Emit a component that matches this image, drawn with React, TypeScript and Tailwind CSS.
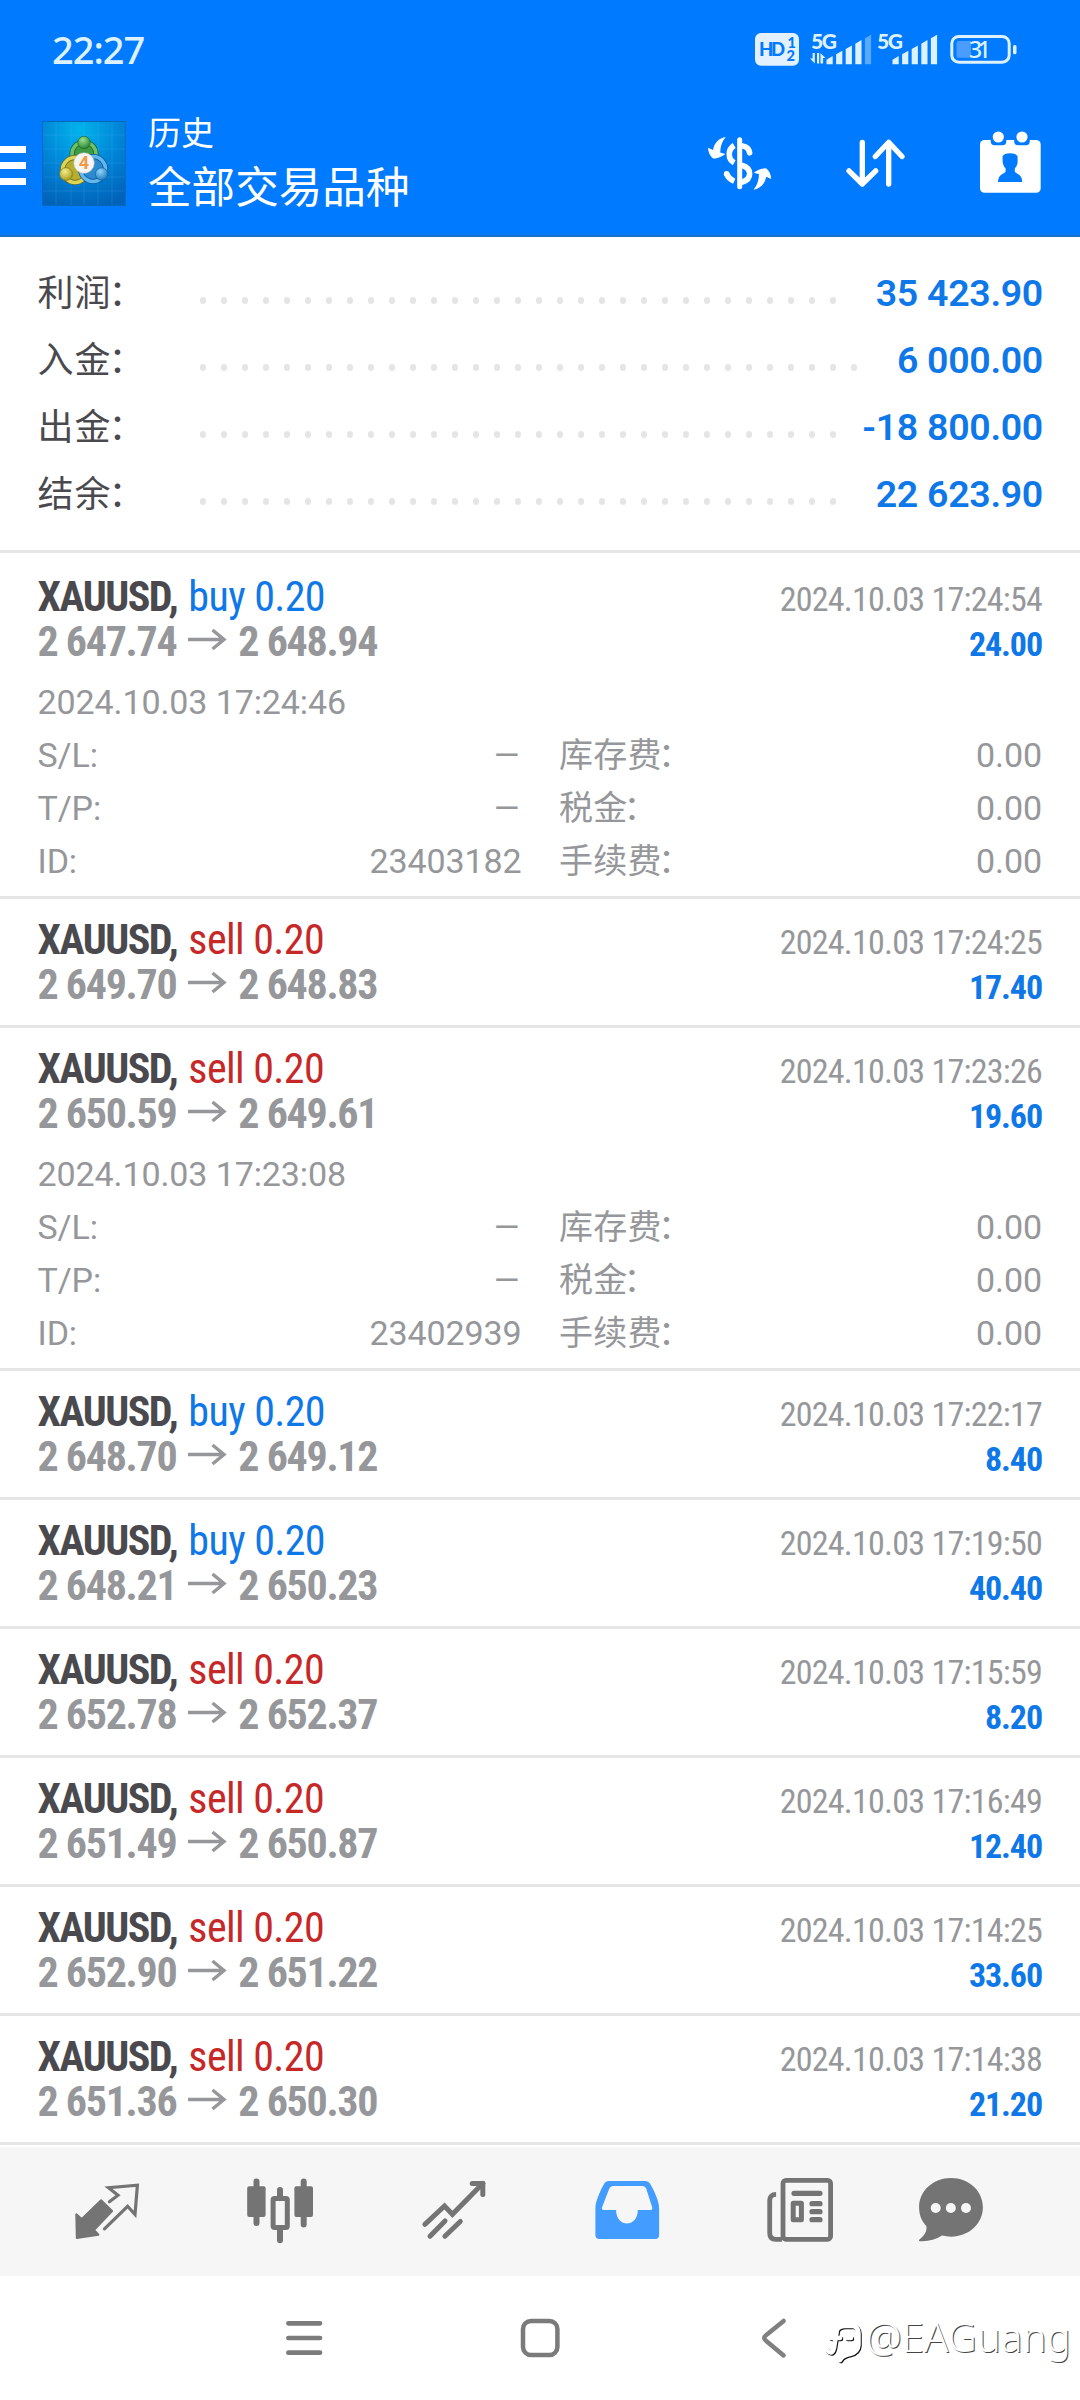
import type { ReactNode } from "react";
import classNames from "clsx";

type Side = "buy" | "sell";

interface Deal {
  side: Side;
  volume: string;
  open: string;
  close: string;
  closedAt: string;
  profit: string;
  details?: {
    openedAt: string;
    id: string;
  };
}

const summary = [
  { label: "利润", value: "35 423.90", dots: 31 },
  { label: "入金", value: "6 000.00", dots: 32 },
  { label: "出金", value: "-18 800.00", dots: 31 },
  { label: "结余", value: "22 623.90", dots: 31 },
];

const deals: Deal[] = [
  {
    side: "buy",
    volume: "0.20",
    open: "2 647.74",
    close: "2 648.94",
    closedAt: "2024.10.03 17:24:54",
    profit: "24.00",
    details: { openedAt: "2024.10.03 17:24:46", id: "23403182" },
  },
  {
    side: "sell",
    volume: "0.20",
    open: "2 649.70",
    close: "2 648.83",
    closedAt: "2024.10.03 17:24:25",
    profit: "17.40",
  },
  {
    side: "sell",
    volume: "0.20",
    open: "2 650.59",
    close: "2 649.61",
    closedAt: "2024.10.03 17:23:26",
    profit: "19.60",
    details: { openedAt: "2024.10.03 17:23:08", id: "23402939" },
  },
  {
    side: "buy",
    volume: "0.20",
    open: "2 648.70",
    close: "2 649.12",
    closedAt: "2024.10.03 17:22:17",
    profit: "8.40",
  },
  {
    side: "buy",
    volume: "0.20",
    open: "2 648.21",
    close: "2 650.23",
    closedAt: "2024.10.03 17:19:50",
    profit: "40.40",
  },
  {
    side: "sell",
    volume: "0.20",
    open: "2 652.78",
    close: "2 652.37",
    closedAt: "2024.10.03 17:15:59",
    profit: "8.20",
  },
  {
    side: "sell",
    volume: "0.20",
    open: "2 651.49",
    close: "2 650.87",
    closedAt: "2024.10.03 17:16:49",
    profit: "12.40",
  },
  {
    side: "sell",
    volume: "0.20",
    open: "2 652.90",
    close: "2 651.22",
    closedAt: "2024.10.03 17:14:25",
    profit: "33.60",
  },
  {
    side: "sell",
    volume: "0.20",
    open: "2 651.36",
    close: "2 650.30",
    closedAt: "2024.10.03 17:14:38",
    profit: "21.20",
  },
];

const barTops = [23.7, 18.3, 13, 7.7, 2.3];

const Signal = ({ weak }: { weak?: boolean }) => (
  <svg className="overflow-visible" width="62" height="34" viewBox="0 0 62 34" fill="#def1ff">
    <text
      x="0"
      y="15.5"
      fontSize="21"
      fontWeight="900"
      fontFamily="Lato, sans-serif"
      textLength="26"
    >
      5G
    </text>
    {weak && <path d="M3.8 20v10.5L-1 25.5h2.6V20zM6 30.5V20h2.2v10.5zM9.5 20l5 5h-2.4v5.5H9.5z" />}
    {barTops.map((top, i) => (
      <path
        key={top}
        opacity={weak && i === 4 ? 0.4 : 1}
        d={`M${15.5 + i * 9.6} 31.3V${top + 3}l6.2 -3.6V31.3z`}
      />
    ))}
  </svg>
);

const StatusBar = () => (
  <div className="flex h-[100px] items-start pl-[52px] pr-[63px] text-[#def1ff]">
    <span className="mt-[26px] font-['Noto_Sans'] text-[38px] leading-[46px] font-medium tracking-[-1px]">
      22:27
    </span>
    <svg className="mt-[33px] ml-auto" width="45" height="33" viewBox="0 0 45 33">
      <rect width="44" height="32.7" rx="6" fill="#e3f1ff" />
      <g fill="#007aff" fontFamily="Lato, sans-serif" fontWeight="900">
        <text x="4" y="23" fontSize="18.5" textLength="26">
          HD
        </text>
        <text x="32.5" y="15" fontSize="14.5">
          1
        </text>
        <text x="31.5" y="28.3" fontSize="14.5">
          2
        </text>
      </g>
    </svg>
    <div className="mt-[33px] ml-[11px] flex gap-1">
      <Signal weak />
      <Signal />
    </div>
    <svg className="mt-[33px] ml-[10px]" width="68" height="34" viewBox="0 0 68 34">
      <rect x="2.8" y="3.5" width="57.4" height="25.7" rx="7" fill="none" stroke="#def1ff" strokeWidth="3" />
      <path d="M9.5 8H22v16.7H9.5a2 2 0 0 1-2-2V10a2 2 0 0 1 2-2z" fill="#4a9dff" />
      <rect x="64" y="12" width="3.5" height="9.3" rx="1.5" fill="#def1ff" />
      <text x="20" y="25.2" fontSize="23" fontWeight="500" fontFamily="Noto Sans, sans-serif" textLength="22" fill="#def1ff">
        31
      </text>
    </svg>
  </div>
);

const AppLogo = () => (
  <svg width="84" height="85" viewBox="0 0 84 85">
    <defs>
      <radialGradient id="sky" cx="0.45" cy="0.1" r="0.95">
        <stop offset="0" stopColor="#00b4ec" />
        <stop offset="0.5" stopColor="#0086d8" />
        <stop offset="1" stopColor="#0062b8" />
      </radialGradient>
      <radialGradient id="green" cx="0.4" cy="0.3" r="0.8">
        <stop offset="0" stopColor="#9be08a" />
        <stop offset="1" stopColor="#1c7a2c" />
      </radialGradient>
      <radialGradient id="yellow" cx="0.4" cy="0.3" r="0.8">
        <stop offset="0" stopColor="#f3ee8c" />
        <stop offset="1" stopColor="#a39412" />
      </radialGradient>
      <radialGradient id="blue" cx="0.4" cy="0.3" r="0.8">
        <stop offset="0" stopColor="#8fd4fa" />
        <stop offset="1" stopColor="#1470b8" />
      </radialGradient>
    </defs>
    <rect x="0.5" y="0.5" width="83" height="84" fill="url(#sky)" stroke="#0568c0" />
    <path
      d="M14 1v83M29 1v83M42 1v83M56 1v83M70 1v83M1 14h82M1 28h82M1 42h82M1 56h82M1 70h82"
      stroke="#7fd0ff"
      strokeOpacity="0.18"
      strokeWidth="0.8"
    />
    <circle cx="42" cy="33" r="12" fill="#3f9a45" stroke="#175f34" strokeWidth="5" />
    <circle cx="42" cy="33" r="12" fill="none" stroke="#6cc066" strokeWidth="3.6" />
    <circle cx="33" cy="49" r="12.5" fill="#b7ae30" stroke="#6e6a1c" strokeWidth="5" />
    <circle cx="33" cy="49" r="12.5" fill="none" stroke="#ddd558" strokeWidth="3.6" />
    <circle cx="51" cy="48" r="12.5" fill="#2c8ad0" stroke="#0f5794" strokeWidth="5" />
    <circle cx="51" cy="48" r="12.5" fill="none" stroke="#62b8ee" strokeWidth="3.6" />
    <circle cx="42" cy="21.5" r="6.2" fill="url(#green)" stroke="#1a6a2c" strokeWidth="0.7" />
    <circle cx="24" cy="53" r="6.4" fill="url(#yellow)" stroke="#7c7414" strokeWidth="0.7" />
    <circle cx="59.5" cy="53" r="6.2" fill="url(#blue)" stroke="#11629f" strokeWidth="0.7" />
    <circle cx="42" cy="42" r="10.3" fill="#f5f5f3" stroke="#b9bdb4" strokeWidth="0.6" />
    <text x="42" y="48.4" fontSize="18" fontWeight="700" fontFamily="Roboto, sans-serif" textAnchor="middle" fill="#f09a4a">
      4
    </text>
  </svg>
);

const ActionIcon = ({ children }: { children: ReactNode }) => (
  <svg width="80" height="80" viewBox="0 0 80 80" fill="none" stroke="#fff" strokeLinecap="round" strokeLinejoin="round">
    {children}
  </svg>
);

const turnArrow =
  "M25.7 12.1C20 12.8 14.5 17 13 25L8 22.8C8.3 27.5 10 31 12.8 33.2Q14 33.8 15.5 33.4C19.5 32.8 22.5 31.3 25.3 29L20.2 27.6C20.4 21.5 22 16.5 25.7 12.1z";

const AppBar = () => (
  <div className="flex h-[137px] items-start border-b-2 border-[#1b6fc4]">
    <div className="mt-[46px] flex w-[26px] flex-col gap-[9px]">
      <div className="h-[7px] bg-white" />
      <div className="h-[7px] bg-white" />
      <div className="h-[7px] bg-white" />
    </div>
    <div className="mt-[21px] ml-4">
      <AppLogo />
    </div>
    <div className="mt-[9px] ml-[22px] font-['Noto_Sans_CJK_SC',sans-serif] text-white">
      <div className="text-[33px] leading-[44px]">历史</div>
      <div className="mt-[3px] text-[43.6px] leading-[56px]">全部交易品种</div>
    </div>
    <div className="mt-[25px] mr-[30px] ml-auto flex gap-[55px]">
      <ActionIcon>
        <path d="M39.7 14.8V61.8" strokeWidth="5" />
        <g strokeWidth="5.6">
          <path d="M34.2 20.5C27.6 24.5 27.6 34 34.2 37.8M34.2 56.3C30 54.5 28 52 26.6 48.8" strokeLinecap="butt" />
          <path d="M42.5 21C46.5 21.5 49 24 49.6 27.8M42.5 40.5C52 43.5 52 54 42.5 57M26.6 48.8v.2" />
        </g>
        <g fill="#fff" stroke="none">
          <path d={turnArrow} />
          <path d={turnArrow} transform="rotate(180 39.6 38.4)" />
        </g>
      </ActionIcon>
      <ActionIcon>
        <path d="M27.3 17.5V59M14 45.8 27.3 59 40.7 45.8M53.7 59V17.3M40.3 31.5 53.7 17.3 67 31.5" strokeWidth="5.3" />
      </ActionIcon>
      <ActionIcon>
        <g stroke="none">
          <rect x="10" y="15" width="60.7" height="52.8" rx="4.5" fill="#fff" />
          <rect x="20.7" y="8" width="15.6" height="12.3" rx="4" fill="#007aff" />
          <rect x="44.2" y="8" width="15.6" height="12.3" rx="4" fill="#007aff" />
          <circle cx="28.3" cy="12" r="5.6" fill="#fff" />
          <circle cx="52" cy="12" r="5.6" fill="#fff" />
          <path
            d="M32.5 31.5Q34 28.2 40 28.2T47.6 31.5V37.5Q47.2 41 44.8 43.5V46.8C46.5 49 52.2 49.5 52.2 57H28C28 49.5 34 49 35.6 46.8V43.5Q33.2 41 32.7 37.5z"
            fill="#007aff"
          />
        </g>
      </ActionIcon>
    </div>
  </div>
);

const Summary = () => (
  <div className="border-b-[3px] border-[#e5e5e5] pt-[23px] pr-[37px] pb-[22px] pl-[37.5px]">
    {summary.map(({ label, value, dots }) => (
      <div key={label} className="flex h-[67px] items-baseline justify-between leading-[67px]">
        <span className="w-[162px] font-['Noto_Sans_CJK_SC',sans-serif] text-[36px] leading-[60px] tracking-[1px] text-[#4a494e]">
          {label}
          <span className="-ml-[3px]">：</span>
        </span>
        <div className="mr-auto mt-[14px] flex gap-[14.5px] self-center">
          {Array.from({ length: dots }, (_, i) => (
            <div key={i} className="size-[6.5px] rounded-full bg-[#e5e5e5]" />
          ))}
        </div>
        <span className="text-[37.5px] font-semibold tracking-[-0.3px] text-[#0f78e8]">{value}</span>
      </div>
    ))}
  </div>
);

const DetailRow = ({ label, value, fee }: { label: string; value?: string; fee: string }) => (
  <div className="flex h-[53px] items-baseline">
    <span>{label}</span>
    <span className="ml-auto w-[300px] text-right">
      {value ?? <span className="inline-block origin-right scale-x-[1.28]">–</span>}
    </span>
    <span className="ml-[37.5px] w-[300px] font-['Noto_Sans_CJK_SC',sans-serif] leading-[46px] font-normal tracking-[0.3px]">
      {fee}
      <span className="-ml-[4px]">：</span>
    </span>
    <span className="w-[183px] text-right">0.00</span>
  </div>
);

const DealItem = ({ deal }: { deal: Deal }) => (
  <div
    className={classNames(
      "border-b-[3px] border-[#e5e5e5] pt-[18px] pr-[38px] pl-[37.5px]",
      deal.details ? "h-[343px]" : "h-[129px]",
    )}
  >
    <div className="font-['Roboto_Condensed',sans-serif]">
      <div className="flex h-[45px] items-baseline justify-between leading-[45px]">
        <div className="text-[42px]">
          <span className="font-bold tracking-[-1.5px] text-[#4a494e]">XAUUSD,</span>
          <span
            className={classNames(
              "ml-[11px] tracking-[-0.6px]",
              deal.side === "buy" ? "text-[#0f78e8]" : "text-[#c62828]",
            )}
          >
            {deal.side} {deal.volume}
          </span>
        </div>
        <span className="text-[34px] tracking-[-0.75px] text-[#96979a]">{deal.closedAt}</span>
      </div>
      <div className="flex h-[45px] items-baseline justify-between leading-[45px]">
        <div className="flex items-baseline text-[42px] font-bold tracking-[-1.3px] text-[#96979a]">
          <span>{deal.open}</span>
          <svg
            className="mx-3 overflow-visible"
            width="38"
            height="22"
            viewBox="0 0 38 22"
            fill="none"
            stroke="#96979a"
            strokeWidth="3.4"
          >
            <path d="M0 5.5H36M24.500 -4 36 5.5 24.500 15" />
          </svg>
          <span>{deal.close}</span>
        </div>
        <span className="text-[34px] font-bold tracking-[-1.1px] text-[#0f78e8]">{deal.profit}</span>
      </div>
    </div>
    {deal.details && (
      <div className="mt-3 text-[34px] leading-[53px] font-[380] tracking-[-0.1px] text-[#96979a]">
        <div>{deal.details.openedAt}</div>
        <DetailRow label="S/L:" fee="库存费" />
        <DetailRow label="T/P:" fee="税金" />
        <DetailRow label="ID:" value={deal.details.id} fee="手续费" />
      </div>
    )}
  </div>
);

const Tab = ({ children }: { children: ReactNode }) => (
  <div className="flex w-[173.3px] justify-center">
    <svg
      className="overflow-visible"
      width="80"
      height="80"
      viewBox="0 0 80 80"
      fill="none"
      stroke="#747474"
      strokeLinecap="round"
      strokeLinejoin="round"
    >
      {children}
    </svg>
  </div>
);

const TabBar = () => (
  <div className="mt-[2px] flex h-[129px] bg-[#f6f6f6] pt-[23px] pl-[20.5px]">
    <Tab>
      <path d="M9.3 44.3 14.8 49 34.1 30.3 45.1 41 27 60 31.4 64.8 9.8 67.9z" fill="#747474" strokeWidth="2" />
      <path d="M42.4 31.7 51 25.3 41.5 17.7 70.4 15.2 68 44.5 60.6 36.3 37.5 58.8" strokeWidth="3.2" strokeLinejoin="miter" />
    </Tab>
    <Tab>
      <path d="M16.5 11.5V53M63.7 11.5V54.5M40 20v8M40 60V70.3" strokeWidth="6" />
      <g fill="#747474" stroke="none">
        <rect x="7.2" y="16.3" width="18.4" height="30.8" rx="2" />
        <rect x="54.4" y="16.3" width="18.6" height="30.8" rx="2" />
      </g>
      <rect x="33.1" y="28.5" width="14.2" height="29" rx="1.5" strokeWidth="5" />
    </Tab>
    <Tab>
      <path d="M10.9 54.3 30.5 36 38.4 44.3 69 13.3M16 66.2 31 50.9M30.9 66.2 46.3 51.5" strokeWidth="5" strokeLinejoin="miter" />
      <path d="M58.2 13.6H68.8V24.6" strokeWidth="5" />
    </Tab>
    <Tab>
      <path
        fillRule="evenodd"
        stroke="none"
        fill="#439cff"
        d="M21.5 11H58.5Q61.5 11 63 13.5C68 22 72.1 32 72.1 38V65Q72.1 69 68.1 69H12.4Q8.4 69 8.4 65V38C8.4 32 12.5 22 17.3 13.5Q18.6 11 21.5 11zM26 16Q23.3 16 22.3 18.6L15 37.5Q14.4 40 16.8 40H29.1C29.1 58 50.8 58 50.8 40H63.5Q65.9 40 65.2 37.5L59.2 18.6Q58.2 16 55.5 16z"
      />
    </Tab>
    <Tab>
      <rect x="23" y="10.4" width="47.6" height="58.9" rx="3" strokeWidth="4.8" />
      <path d="M16.1 24.4Q9.7 24.4 9.7 30.5V63Q9.7 69.3 16 69.3H22" strokeWidth="4.8" strokeLinecap="butt" />
      <path d="M34 23.3H60M52 33.7h8M52 41.7h8M52 49.7h8" strokeWidth="5.2" />
      <rect x="33.2" y="33.2" width="8.2" height="16.6" strokeWidth="5" />
    </Tab>
    <Tab>
      <g transform="translate(-22.5 0)" stroke="none">
        <path
          d="M39.5 8C57.5 8 71.4 21 71.4 37.3S57.5 66.7 39.5 66.7Q35 66.7 30.6 65.6C24 69.8 16 71.8 8.3 71.2 7 71 7.4 70 8.4 69 13 65.3 15.4 61.5 15 56.2 10 51 7.6 45 7.6 37.3 7.6 21 21.5 8 39.5 8z"
          fill="#747474"
        />
        <circle cx="24.2" cy="38" r="5" fill="#f6f6f6" />
        <circle cx="39.3" cy="38" r="5" fill="#f6f6f6" />
        <circle cx="54.5" cy="38" r="5" fill="#f6f6f6" />
      </g>
    </Tab>
  </div>
);

const Watermark = () => (
  <div className="absolute top-[31px] left-[824px] flex items-center text-white">
    <svg width="42" height="60" viewBox="0 0 42 60" fill="none" strokeLinecap="round" strokeWidth="4.5">
      <path d="M4 44Q9 50 11 42L14 24Q16 20 22 20H29Q35 20 35.5 27V39Q35 46 27 48 20 49 17 54M8 32H17M24 32h4" stroke="#111" />
      <path d="M3 43Q8 49 10 41L13 23Q15 19 21 19H28Q34 19 34.5 26V38Q34 45 26 47 19 48 16 53M7 31H16M23 31h4" stroke="#fff" />
    </svg>
    <span className="font-['Noto_Sans',sans-serif] text-[40px] leading-[60px] font-light tracking-[0.2px] [text-shadow:1px_1px_0_#444]">
      @EAGuang
    </span>
  </div>
);

const SystemNav = () => (
  <div className="relative h-[124px]">
    <div className="flex pt-[40px] pl-[282px]">
      <svg width="44" height="44" viewBox="0 0 44 44" stroke="#7b7b7b" strokeWidth="4.7" strokeLinecap="round">
        <path d="M6.4 7.3H38M6.4 22H38M6.4 36.7H38" />
      </svg>
      <svg className="ml-[192px]" width="44" height="44" viewBox="0 0 44 44" fill="none" stroke="#7b7b7b" strokeWidth="4.5">
        <rect x="5" y="4.9" width="34.4" height="34.2" rx="8" />
      </svg>
      <svg className="ml-[192px]" width="44" height="44" viewBox="0 0 44 44" fill="none" stroke="#808080" strokeWidth="4.5" strokeLinecap="round">
        <path d="M29.6 5 12 19.3Q8.5 22 12 24.7L29.6 39.4" />
      </svg>
    </div>
    <Watermark />
  </div>
);

export default function App() {
  return (
    <div className="h-[2400px] w-[1080px] overflow-hidden bg-white font-['Roboto',sans-serif]">
      <header className="bg-[#007aff]">
        <StatusBar />
        <AppBar />
      </header>
      <Summary />
      <div className="mt-[3px]">
        {deals.map((deal) => (
          <DealItem key={deal.closedAt} deal={deal} />
        ))}
      </div>
      <TabBar />
      <SystemNav />
    </div>
  );
}
